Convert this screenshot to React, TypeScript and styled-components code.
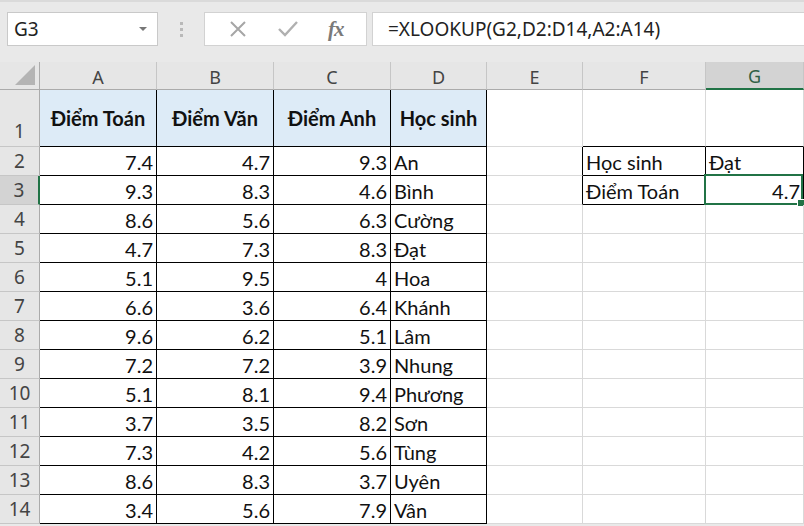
import * as React from 'react';
import styled, { createGlobalStyle, css } from 'styled-components';

const GlobalStyle = createGlobalStyle`
	html, body {
		margin: 0;
		padding: 0;
		background: #ffffff;
		overflow: hidden;
	}
	* {
		box-sizing: border-box;
	}
`;

const GREEN = '#217346';
const COLS = ['A', 'B', 'C', 'D', 'E', 'F', 'G'];
const COL_WIDTHS = [117, 117, 117, 96, 96, 123, 98];
const ROW_HEIGHTS = [57, 29, 29, 29, 29, 29, 29, 29, 29, 29, 29, 29, 29, 29];

type CellValue = { text: string; kind: 'num' | 'text' | 'head' };

const scores: [string, string, string, string][] = [
	['7.4', '4.7', '9.3', 'An'],
	['9.3', '8.3', '4.6', 'Bình'],
	['8.6', '5.6', '6.3', 'Cường'],
	['4.7', '7.3', '8.3', 'Đạt'],
	['5.1', '9.5', '4', 'Hoa'],
	['6.6', '3.6', '6.4', 'Khánh'],
	['9.6', '6.2', '5.1', 'Lâm'],
	['7.2', '7.2', '3.9', 'Nhung'],
	['5.1', '8.1', '9.4', 'Phương'],
	['3.7', '3.5', '8.2', 'Sơn'],
	['7.3', '4.2', '5.6', 'Tùng'],
	['8.6', '8.3', '3.7', 'Uyên'],
	['3.4', '5.6', '7.9', 'Vân'],
];

const buildGrid = (): (CellValue | null)[][] => {
	const grid: (CellValue | null)[][] = ROW_HEIGHTS.map(() => COLS.map(() => null));
	['Điểm Toán', 'Điểm Văn', 'Điểm Anh', 'Học sinh'].forEach((t, c) => {
		grid[0][c] = { text: t, kind: 'head' };
	});
	scores.forEach((row, r) => {
		row.forEach((v, c) => {
			grid[r + 1][c] = { text: v, kind: c === 3 ? 'text' : 'num' };
		});
	});
	grid[1][5] = { text: 'Học sinh', kind: 'text' };
	grid[1][6] = { text: 'Đạt', kind: 'text' };
	grid[2][5] = { text: 'Điểm Toán', kind: 'text' };
	grid[2][6] = { text: '4.7', kind: 'num' };
	return grid;
};

// ô có viền đen
const inBox = (r: number, c: number) =>
	(r >= 0 && r <= 13 && c >= 0 && c <= 3) || (r >= 1 && r <= 2 && c >= 5 && c <= 6);

const Page = styled.div`
	width: 804px;
	height: 526px;
	background: #e9e9e9;
	display: flex;
	flex-direction: column;
	overflow: hidden;
`;

const Toolbar = styled.div`
	height: 62px;
	display: flex;
	align-items: flex-start;
	padding: 10px 0 0 7px;
	border-top: 2px solid #dadada;
	font-family: 'Noto Sans', 'Open Sans', sans-serif;
`;

const NameBox = styled.div`
	width: 151px;
	height: 34px;
	background: #fff;
	border: 1px solid #c9c9c9;
	display: flex;
	align-items: center;
	justify-content: space-between;
	padding: 0 10px 0 6px;
	font-size: 19px;
	color: #222;
`;

const Caret = styled.span`
	width: 0;
	height: 0;
	border-left: 4px solid transparent;
	border-right: 4px solid transparent;
	border-top: 4px solid #777;
`;

const Grip = styled.div`
	width: 46px;
	height: 34px;
	display: flex;
	flex-direction: column;
	align-items: center;
	justify-content: center;
	gap: 3px;
	& span {
		width: 3px;
		height: 3px;
		background: #b9b9b9;
	}
`;

const ButtonBox = styled.div`
	width: 163px;
	height: 34px;
	background: #fff;
	border: 1px solid #d2d2d2;
	display: flex;
	align-items: center;
	justify-content: space-around;
	padding: 0 8px;
`;

const FxLabel = styled.span`
	font-family: 'Liberation Serif', serif;
	font-style: italic;
	font-weight: bold;
	font-size: 21px;
	color: #7a7a7a;
	letter-spacing: -1px;
`;

const FormulaBox = styled.div`
	flex: 1;
	height: 34px;
	margin-left: 5px;
	background: #fff;
	border: 1px solid #d2d2d2;
	border-right: none;
	display: flex;
	align-items: center;
	padding-left: 15px;
	font-size: 19px;
	color: #222;
`;

const Sheet = styled.div`
	display: grid;
	grid-template-columns: 40px ${COL_WIDTHS.map((w) => `${w}px`).join(' ')};
	grid-template-rows: 28px ${ROW_HEIGHTS.map((h) => `${h}px`).join(' ')};
	background: #fff;
`;

const Corner = styled.div`
	background: #e6e6e6;
	border-right: 1px solid #ababab;
	border-bottom: 1px solid #ababab;
	position: relative;
	&::after {
		content: '';
		position: absolute;
		right: 4px;
		bottom: 4px;
		width: 0;
		height: 0;
		border-left: 20px solid transparent;
		border-bottom: 20px solid #b4b4b4;
	}
`;

const ColHead = styled.div<{ $sel?: boolean }>`
	background: ${(p) => (p.$sel ? '#d3d3d3' : '#e6e6e6')};
	border-right: 1px solid #c6c6c6;
	border-bottom: ${(p) => (p.$sel ? `2px solid ${GREEN}` : '1px solid #ababab')};
	display: flex;
	align-items: center;
	justify-content: center;
	padding-top: 2px;
	font-family: 'Noto Sans', 'Open Sans', sans-serif;
	font-size: 18px;
	color: ${(p) => (p.$sel ? '#305f45' : '#444')};
`;

const RowHead = styled.div<{ $sel?: boolean; $tall?: boolean }>`
	background: ${(p) => (p.$sel ? '#d3d3d3' : '#e6e6e6')};
	border-right: ${(p) => (p.$sel ? `2px solid ${GREEN}` : '1px solid #ababab')};
	border-bottom: 1px solid #c6c6c6;
	display: flex;
	align-items: ${(p) => (p.$tall ? 'flex-end' : 'center')};
	padding-bottom: ${(p) => (p.$tall ? '2px' : '0')};
	justify-content: center;
	font-family: 'Noto Sans', 'Open Sans', sans-serif;
	font-size: 19px;
	color: #444;
`;

const Cell = styled.div<{ $rb: boolean; $bb: boolean; $kind?: CellValue['kind'] }>`
	position: relative;
	border-right: 1px solid ${(p) => (p.$rb ? '#000' : '#d9d9d9')};
	border-bottom: 1px solid ${(p) => (p.$bb ? '#000' : '#d9d9d9')};
	display: flex;
	align-items: flex-end;
	padding: 0 3px 1px 3px;
	font-family: Lato, 'Liberation Sans', sans-serif;
	font-size: 20px;
	color: #111;
	white-space: nowrap;
	${(p) =>
		p.$kind === 'num' &&
		css`
			justify-content: flex-end;
		`}
	${(p) =>
		p.$kind === 'head' &&
		css`
			background: #ddebf7;
			justify-content: center;
			align-items: center;
			font-weight: bold;
			font-size: 20px;
			padding-bottom: 0;
		`}
`;

const Selection = styled.div`
	position: absolute;
	left: -2px;
	top: -2px;
	right: 0;
	bottom: -1px;
	border: 2px solid ${GREEN};
	pointer-events: none;
	&::after {
		content: '';
		position: absolute;
		right: -4px;
		bottom: -4px;
		width: 6px;
		height: 6px;
		background: ${GREEN};
		border: 1px solid #fff;
	}
`;

const CrossIcon = () => (
	<svg width="20" height="20" viewBox="0 0 20 20">
		<path d="M3 3 L17 17 M17 3 L3 17" stroke="#a6a6a6" strokeWidth="2" fill="none" />
	</svg>
);

const CheckIcon = () => (
	<svg width="22" height="20" viewBox="0 0 22 20">
		<path d="M2 10 L8 16 L20 3" stroke="#b0b0b0" strokeWidth="2.4" fill="none" />
	</svg>
);

const App: React.FunctionComponent = () => {
	const grid = React.useMemo(buildGrid, []);

	return (
		<>
			<GlobalStyle />
			<Page>
				<Toolbar>
					<NameBox>
						<span>G3</span>
						<Caret />
					</NameBox>
					<Grip>
						<span />
						<span />
						<span />
					</Grip>
					<ButtonBox>
						<CrossIcon />
						<CheckIcon />
						<FxLabel>fx</FxLabel>
					</ButtonBox>
					<FormulaBox>=XLOOKUP(G2,D2:D14,A2:A14)</FormulaBox>
				</Toolbar>
				<Sheet>
					<Corner />
					{COLS.map((c) => (
						<ColHead key={c} $sel={c === 'G'}>
							{c}
						</ColHead>
					))}
					{grid.map((row, r) => (
						<React.Fragment key={r}>
							<RowHead $sel={r === 2} $tall={r === 0}>
								{r + 1}
							</RowHead>
							{row.map((cell, c) => (
								<Cell
									key={c}
									$rb={inBox(r, c) || inBox(r, c + 1)}
									$bb={inBox(r, c) || inBox(r + 1, c)}
									$kind={cell?.kind}
								>
									{cell?.text}
									{r === 2 && c === 6 && <Selection />}
								</Cell>
							))}
						</React.Fragment>
					))}
				</Sheet>
			</Page>
		</>
	);
};

export default App;
